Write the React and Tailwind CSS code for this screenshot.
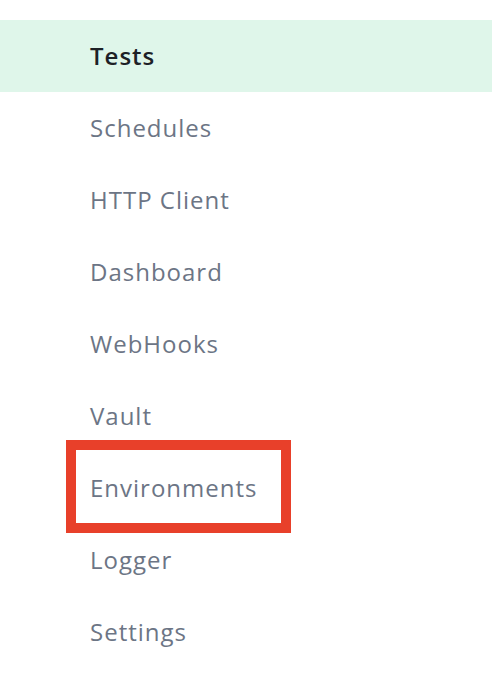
const items = ['Tests', 'Schedules', 'HTTP Client', 'Dashboard', 'WebHooks', 'Vault', 'Environments', 'Logger', 'Settings']

export default function App() {
  return (
    <div className="relative w-[492px] h-[680px] bg-white pt-[20px] font-['Open_Sans',sans-serif] overflow-hidden">
      {items.map((name, i) => (
        <div
          key={name}
          className={`h-[72px] flex items-center pl-[90px] text-[24px] tracking-[1px] ${
            i === 0 ? 'bg-[#dff6ea] text-[#1d2126] font-semibold' : 'text-[#6c7585]'
          }`}
        >
          {name}
        </div>
      ))}
      {/* highlight box */}
      <div className="absolute left-[66px] top-[440px] w-[225px] h-[93px] border-[10px] border-[#e8402a]" />
    </div>
  )
}
